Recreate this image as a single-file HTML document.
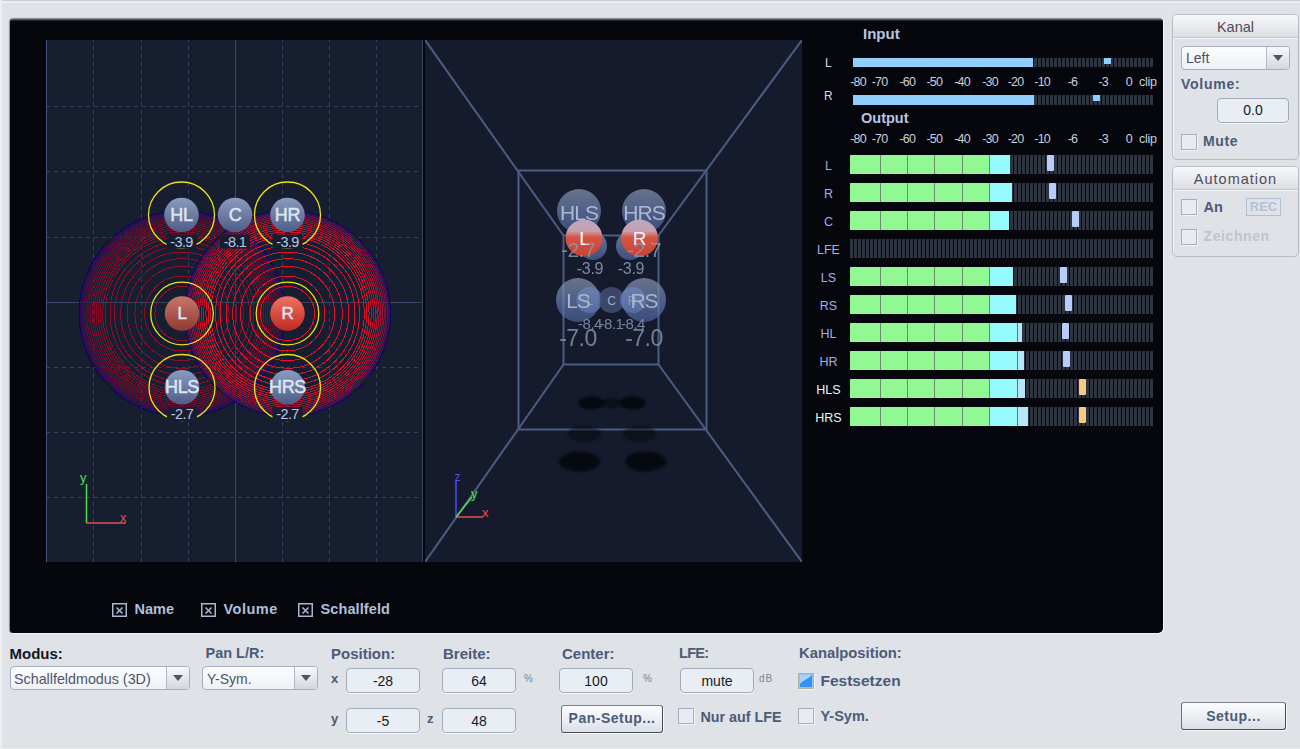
<!DOCTYPE html><html><head><meta charset="utf-8"><style>

html,body{margin:0;padding:0;}
body{width:1300px;height:749px;overflow:hidden;position:relative;background:#dfe2e6;font-family:"Liberation Sans",sans-serif;}
.a{position:absolute;white-space:nowrap;}
.lbl{position:absolute;white-space:nowrap;font-weight:bold;font-size:14.5px;color:#4b5b78;line-height:1;}
.inp{position:absolute;box-sizing:border-box;border:1px solid #a3abb8;border-radius:4px;background:#e9edf4;text-align:center;font-size:14px;color:#141a28;box-shadow:0 1px 0 #f6f7f9;}
.cb{position:absolute;box-sizing:border-box;width:16px;height:16px;border:1px solid #a7afbd;background:#e8ecf2;box-shadow:1px 1px 0 #f4f5f7;}
.dd{position:absolute;box-sizing:border-box;border:1px solid #a7afbf;border-radius:4px;background:linear-gradient(#fbfcfd,#eef1f5);font-size:14px;color:#4d556c;}
.dd .ar{position:absolute;right:0;top:0;bottom:0;width:22px;border-left:1px solid #b4bac6;background:linear-gradient(#f8f9fc,#d2d6de);border-radius:0 3px 3px 0;}
.dd .ar:after{content:"";position:absolute;left:6px;top:8px;border-left:5px solid transparent;border-right:5px solid transparent;border-top:6px solid #505460;}
.btn{position:absolute;box-sizing:border-box;border:1px solid #454c58;border-top-color:#7a808a;border-left-color:#6a707c;border-radius:3px;background:linear-gradient(#fbfcfe 0,#eef0f6 45%,#dcdfe6 100%);font-weight:bold;font-size:14px;color:#4b5b78;text-align:center;box-shadow:1px 1px 0 #f6f7f9;}

</style></head><body>
<div class="a" style="left:0;top:0;width:1300px;height:1px;background:#c9cdd3"></div>
<div class="a" style="left:0;top:1px;width:1300px;height:2px;background:#eceef1"></div>
<div class="a" style="left:0;top:0;width:2px;height:749px;background:#eceef1"></div>
<div class="a" style="left:0;top:748px;width:1300px;height:1px;background:#e8eaee"></div>
<div class="a" style="left:10px;top:18px;width:1153px;height:615px;background:linear-gradient(#a4a8ae 0,#6c7078 1px,#22252c 2.5px,#05070c 3.5px);border-radius:4px 4px 5px 3px;box-shadow:1px 1px 0 #f4f5f7, -1px 0 1px #8a8e96"></div>
<svg class="a" style="left:46px;top:40px" width="377" height="522" viewBox="0 0 377 522">
<defs>
<radialGradient id="fldL" cx="0.5" cy="0.5" r="0.5"><stop offset="0" stop-color="#171e30" stop-opacity="0.1"/><stop offset="0.7" stop-color="#1b1c30" stop-opacity="0.15"/><stop offset="1" stop-color="#30142e" stop-opacity="0.35"/></radialGradient>
<radialGradient id="fldR" cx="0.5" cy="0.5" r="0.5"><stop offset="0" stop-color="#171e30" stop-opacity="0.1"/><stop offset="0.7" stop-color="#1c1c30" stop-opacity="0.15"/><stop offset="1" stop-color="#3a1430" stop-opacity="0.35"/></radialGradient>
<linearGradient id="ballB" x1="0" y1="0" x2="0" y2="1"><stop offset="0" stop-color="#8c9cc0"/><stop offset="1" stop-color="#4c5c84"/></linearGradient>
<linearGradient id="ballL" x1="0" y1="0" x2="0" y2="1"><stop offset="0" stop-color="#c8766a"/><stop offset="1" stop-color="#8e3a34"/></linearGradient>
<linearGradient id="ballR" x1="0" y1="0" x2="0" y2="1"><stop offset="0" stop-color="#f07260"/><stop offset="1" stop-color="#c02a22"/></linearGradient>
</defs>
<rect x="0" y="0" width="377" height="522" fill="#171e30"/>
<line x1="47.5" y1="0" x2="47.5" y2="522" stroke="#33425f" stroke-width="1" stroke-dasharray="4 4" stroke-dashoffset="2"/>
<line x1="95.5" y1="0" x2="95.5" y2="522" stroke="#33425f" stroke-width="1" stroke-dasharray="4 4" stroke-dashoffset="2"/>
<line x1="142.5" y1="0" x2="142.5" y2="522" stroke="#33425f" stroke-width="1" stroke-dasharray="4 4" stroke-dashoffset="2"/>
<line x1="236.5" y1="0" x2="236.5" y2="522" stroke="#33425f" stroke-width="1" stroke-dasharray="4 4" stroke-dashoffset="2"/>
<line x1="283.5" y1="0" x2="283.5" y2="522" stroke="#33425f" stroke-width="1" stroke-dasharray="4 4" stroke-dashoffset="2"/>
<line x1="330.5" y1="0" x2="330.5" y2="522" stroke="#33425f" stroke-width="1" stroke-dasharray="4 4" stroke-dashoffset="2"/>
<line x1="0" y1="66.5" x2="377" y2="66.5" stroke="#33425f" stroke-width="1" stroke-dasharray="4 4"/>
<line x1="0" y1="131.5" x2="377" y2="131.5" stroke="#33425f" stroke-width="1" stroke-dasharray="4 4"/>
<line x1="0" y1="197.5" x2="377" y2="197.5" stroke="#33425f" stroke-width="1" stroke-dasharray="4 4"/>
<line x1="0" y1="327.5" x2="377" y2="327.5" stroke="#33425f" stroke-width="1" stroke-dasharray="4 4"/>
<line x1="0" y1="392.5" x2="377" y2="392.5" stroke="#33425f" stroke-width="1" stroke-dasharray="4 4"/>
<line x1="0" y1="457.5" x2="377" y2="457.5" stroke="#33425f" stroke-width="1" stroke-dasharray="4 4"/>
<line x1="189.5" y1="0" x2="189.5" y2="522" stroke="#3a4a68" stroke-width="1"/>
<line x1="0" y1="262.5" x2="377" y2="262.5" stroke="#3a4a68" stroke-width="1"/>
<line x1="0.5" y1="0" x2="0.5" y2="522" stroke="#3d5580" stroke-width="1"/>
<line x1="376.5" y1="0" x2="376.5" y2="522" stroke="#33445f" stroke-width="1"/>
<circle cx="136" cy="273.5" r="103" fill="url(#fldL)"/><circle cx="136" cy="273.5" r="27.1" fill="none" stroke="rgb(145,12,40)" stroke-width="1" shape-rendering="crispEdges"/><circle cx="136" cy="273.5" r="37.5" fill="none" stroke="rgb(145,12,40)" stroke-width="1" shape-rendering="crispEdges"/><circle cx="136" cy="273.5" r="47.1" fill="none" stroke="rgb(145,12,40)" stroke-width="1" shape-rendering="crispEdges"/><circle cx="136" cy="273.5" r="54.8" fill="none" stroke="rgb(145,12,40)" stroke-width="1" shape-rendering="crispEdges"/><circle cx="136" cy="273.5" r="61.3" fill="none" stroke="rgb(145,12,40)" stroke-width="1" shape-rendering="crispEdges"/><circle cx="136" cy="273.5" r="67.5" fill="none" stroke="rgb(145,12,40)" stroke-width="1" shape-rendering="crispEdges"/><circle cx="136" cy="273.5" r="72" fill="none" stroke="rgb(145,12,40)" stroke-width="1" shape-rendering="crispEdges"/><circle cx="136" cy="273.5" r="76.8" fill="none" stroke="rgb(145,12,40)" stroke-width="1" shape-rendering="crispEdges"/><circle cx="136" cy="273.5" r="79.3" fill="none" stroke="rgb(141,12,40)" stroke-width="1" shape-rendering="crispEdges"/><circle cx="136" cy="273.5" r="81.6" fill="none" stroke="rgb(135,12,40)" stroke-width="1" shape-rendering="crispEdges"/><circle cx="136" cy="273.5" r="83.8" fill="none" stroke="rgb(129,12,41)" stroke-width="1" shape-rendering="crispEdges"/><circle cx="136" cy="273.5" r="85.9" fill="none" stroke="rgb(124,12,41)" stroke-width="1" shape-rendering="crispEdges"/><circle cx="136" cy="273.5" r="87.9" fill="none" stroke="rgb(119,12,41)" stroke-width="1" shape-rendering="crispEdges"/><circle cx="136" cy="273.5" r="89.8" fill="none" stroke="rgb(112,12,45)" stroke-width="1" shape-rendering="crispEdges"/><circle cx="136" cy="273.5" r="91.6" fill="none" stroke="rgb(106,12,48)" stroke-width="1" shape-rendering="crispEdges"/><circle cx="136" cy="273.5" r="93.4" fill="none" stroke="rgb(101,12,52)" stroke-width="1" shape-rendering="crispEdges"/><circle cx="136" cy="273.5" r="95.1" fill="none" stroke="rgb(95,12,55)" stroke-width="1" shape-rendering="crispEdges"/><circle cx="136" cy="273.5" r="96.8" fill="none" stroke="rgb(85,12,63)" stroke-width="1" shape-rendering="crispEdges"/><circle cx="136" cy="273.5" r="98.4" fill="none" stroke="rgb(75,12,72)" stroke-width="1" shape-rendering="crispEdges"/><circle cx="136" cy="273.5" r="100" fill="none" stroke="rgb(60,11,85)" stroke-width="1" shape-rendering="crispEdges"/><circle cx="136" cy="273.5" r="101.5" fill="none" stroke="rgb(43,9,100)" stroke-width="1" shape-rendering="crispEdges"/><circle cx="136" cy="273.5" r="103" fill="none" stroke="rgb(4,6,100)" stroke-width="1" shape-rendering="crispEdges"/>
<circle cx="241.5" cy="273.5" r="103" fill="url(#fldR)"/><circle cx="241.5" cy="273.5" r="27.1" fill="none" stroke="rgb(225,16,40)" stroke-width="1" shape-rendering="crispEdges"/><circle cx="241.5" cy="273.5" r="37.5" fill="none" stroke="rgb(225,16,40)" stroke-width="1" shape-rendering="crispEdges"/><circle cx="241.5" cy="273.5" r="47.1" fill="none" stroke="rgb(225,16,40)" stroke-width="1" shape-rendering="crispEdges"/><circle cx="241.5" cy="273.5" r="54.8" fill="none" stroke="rgb(225,16,40)" stroke-width="1" shape-rendering="crispEdges"/><circle cx="241.5" cy="273.5" r="61.3" fill="none" stroke="rgb(225,16,40)" stroke-width="1" shape-rendering="crispEdges"/><circle cx="241.5" cy="273.5" r="67.5" fill="none" stroke="rgb(225,16,40)" stroke-width="1" shape-rendering="crispEdges"/><circle cx="241.5" cy="273.5" r="72" fill="none" stroke="rgb(225,16,40)" stroke-width="1" shape-rendering="crispEdges"/><circle cx="241.5" cy="273.5" r="76.8" fill="none" stroke="rgb(225,16,40)" stroke-width="1" shape-rendering="crispEdges"/><circle cx="241.5" cy="273.5" r="79.3" fill="none" stroke="rgb(219,16,40)" stroke-width="1" shape-rendering="crispEdges"/><circle cx="241.5" cy="273.5" r="81.6" fill="none" stroke="rgb(210,16,40)" stroke-width="1" shape-rendering="crispEdges"/><circle cx="241.5" cy="273.5" r="83.8" fill="none" stroke="rgb(201,16,41)" stroke-width="1" shape-rendering="crispEdges"/><circle cx="241.5" cy="273.5" r="85.9" fill="none" stroke="rgb(193,16,41)" stroke-width="1" shape-rendering="crispEdges"/><circle cx="241.5" cy="273.5" r="87.9" fill="none" stroke="rgb(184,16,41)" stroke-width="1" shape-rendering="crispEdges"/><circle cx="241.5" cy="273.5" r="89.8" fill="none" stroke="rgb(175,16,45)" stroke-width="1" shape-rendering="crispEdges"/><circle cx="241.5" cy="273.5" r="91.6" fill="none" stroke="rgb(165,16,48)" stroke-width="1" shape-rendering="crispEdges"/><circle cx="241.5" cy="273.5" r="93.4" fill="none" stroke="rgb(156,16,52)" stroke-width="1" shape-rendering="crispEdges"/><circle cx="241.5" cy="273.5" r="95.1" fill="none" stroke="rgb(147,16,55)" stroke-width="1" shape-rendering="crispEdges"/><circle cx="241.5" cy="273.5" r="96.8" fill="none" stroke="rgb(132,16,63)" stroke-width="1" shape-rendering="crispEdges"/><circle cx="241.5" cy="273.5" r="98.4" fill="none" stroke="rgb(117,16,72)" stroke-width="1" shape-rendering="crispEdges"/><circle cx="241.5" cy="273.5" r="100" fill="none" stroke="rgb(94,14,85)" stroke-width="1" shape-rendering="crispEdges"/><circle cx="241.5" cy="273.5" r="101.5" fill="none" stroke="rgb(67,12,100)" stroke-width="1" shape-rendering="crispEdges"/><circle cx="241.5" cy="273.5" r="103" fill="none" stroke="rgb(6,8,100)" stroke-width="1" shape-rendering="crispEdges"/>
<circle cx="135.5" cy="175" r="33" fill="none" stroke="#ecE414" stroke-width="1.3"/>
<circle cx="241.5" cy="175" r="33" fill="none" stroke="#ecE414" stroke-width="1.3"/>
<circle cx="136" cy="273.5" r="31.3" fill="none" stroke="#ecE414" stroke-width="1.3"/>
<circle cx="241.5" cy="273.5" r="31.3" fill="none" stroke="#ecE414" stroke-width="1.3"/>
<circle cx="136" cy="347.5" r="33" fill="none" stroke="#ecE414" stroke-width="1.3"/>
<circle cx="241.5" cy="347.5" r="33" fill="none" stroke="#ecE414" stroke-width="1.3"/>
<rect x="120.5" y="194.5" width="30" height="14" fill="#171e30"/>
<text x="135.5" y="206.5" text-anchor="middle" font-family="Liberation Sans" font-size="14.5" fill="#b4c8e6" letter-spacing="-0.6">-3.9</text>
<rect x="174" y="194.5" width="30" height="14" fill="#171e30"/>
<text x="189" y="206.5" text-anchor="middle" font-family="Liberation Sans" font-size="14.5" fill="#b4c8e6" letter-spacing="-0.6">-8.1</text>
<rect x="226.5" y="194.5" width="30" height="14" fill="#171e30"/>
<text x="241.5" y="206.5" text-anchor="middle" font-family="Liberation Sans" font-size="14.5" fill="#b4c8e6" letter-spacing="-0.6">-3.9</text>
<rect x="121" y="367" width="30" height="14" fill="#171e30"/>
<text x="136" y="379" text-anchor="middle" font-family="Liberation Sans" font-size="14.5" fill="#b4c8e6" letter-spacing="-0.6">-2.7</text>
<rect x="226.5" y="367" width="30" height="14" fill="#171e30"/>
<text x="241.5" y="379" text-anchor="middle" font-family="Liberation Sans" font-size="14.5" fill="#b4c8e6" letter-spacing="-0.6">-2.7</text>
<circle cx="135.5" cy="175" r="17.3" fill="url(#ballB)"/>
<text x="135.5" y="180.5" text-anchor="middle" font-family="Liberation Sans" font-size="18" fill="#dde6f2" stroke="#dde6f2" stroke-width="0.5" letter-spacing="-0.3">HL</text>
<circle cx="189" cy="175" r="17.3" fill="url(#ballB)"/>
<text x="189" y="180.5" text-anchor="middle" font-family="Liberation Sans" font-size="18" fill="#dde6f2" stroke="#dde6f2" stroke-width="0.5" letter-spacing="-0.3">C</text>
<circle cx="241.5" cy="175" r="17.3" fill="url(#ballB)"/>
<text x="241.5" y="180.5" text-anchor="middle" font-family="Liberation Sans" font-size="18" fill="#dde6f2" stroke="#dde6f2" stroke-width="0.5" letter-spacing="-0.3">HR</text>
<circle cx="136" cy="273.5" r="17.3" fill="url(#ballL)"/>
<text x="136" y="279.0" text-anchor="middle" font-family="Liberation Sans" font-size="17" fill="#dde6f2" stroke="#dde6f2" stroke-width="0.5" letter-spacing="-0.3">L</text>
<circle cx="241.5" cy="273.5" r="17.3" fill="url(#ballR)"/>
<text x="241.5" y="279.0" text-anchor="middle" font-family="Liberation Sans" font-size="17" fill="#dde6f2" stroke="#dde6f2" stroke-width="0.5" letter-spacing="-0.3">R</text>
<circle cx="136" cy="347.3" r="17.3" fill="url(#ballB)"/>
<text x="136" y="352.8" text-anchor="middle" font-family="Liberation Sans" font-size="18" fill="#dde6f2" stroke="#dde6f2" stroke-width="0.5" letter-spacing="-0.3">HLS</text>
<circle cx="241.5" cy="347.3" r="17.3" fill="url(#ballB)"/>
<text x="241.5" y="352.8" text-anchor="middle" font-family="Liberation Sans" font-size="18" fill="#dde6f2" stroke="#dde6f2" stroke-width="0.5" letter-spacing="-0.3">HRS</text>
<line x1="40.5" y1="444" x2="40.5" y2="483" stroke="#4ee04e" stroke-width="1.5"/>
<line x1="40" y1="483" x2="80" y2="483" stroke="#e05050" stroke-width="1.5"/>
<text x="34" y="442" font-family="Liberation Sans" font-size="13" fill="#4ee04e">y</text>
<text x="74" y="482" font-family="Liberation Sans" font-size="13" fill="#e05050">x</text>
</svg>
<svg class="a" style="left:425px;top:40px" width="377" height="522" viewBox="0 0 377 522">
<defs>
<linearGradient id="sphB" x1="0" y1="0" x2="0" y2="1"><stop offset="0" stop-color="#8894ae" stop-opacity="0.85"/><stop offset="0.5" stop-color="#6a80b4" stop-opacity="0.8"/><stop offset="1" stop-color="#5068a4" stop-opacity="0.75"/></linearGradient>
<linearGradient id="sphR" x1="0" y1="0" x2="0" y2="1"><stop offset="0" stop-color="#b8a8c4"/><stop offset="0.32" stop-color="#c8a0ac"/><stop offset="0.48" stop-color="#d65444"/><stop offset="1" stop-color="#c84232"/></linearGradient>
<filter id="blr" x="-50%" y="-50%" width="200%" height="200%" color-interpolation-filters="sRGB"><feGaussianBlur stdDeviation="1.3"/></filter>
</defs>
<rect x="0" y="0" width="377" height="522" fill="#151b2d"/>
<rect x="93.5" y="130.5" width="188.0" height="259.0" fill="none" stroke="#4b5d82" stroke-width="2"/>
<rect x="138.5" y="195.5" width="95.0" height="129.0" fill="none" stroke="#4b5d82" stroke-width="2"/>
<line x1="0" y1="0" x2="138.5" y2="195.5" stroke="#4b5d82" stroke-width="2"/>
<line x1="377" y1="0" x2="233.5" y2="195.5" stroke="#4b5d82" stroke-width="2"/>
<line x1="0" y1="522" x2="138.5" y2="324.5" stroke="#4b5d82" stroke-width="2"/>
<line x1="377" y1="522" x2="233.5" y2="324.5" stroke="#4b5d82" stroke-width="2"/>
<ellipse cx="166.5" cy="363" rx="13.5" ry="6.5" fill="#05070c" opacity="0.9" filter="url(#blr)"/>
<ellipse cx="186.5" cy="363" rx="9" ry="5.5" fill="#05070c" opacity="0.5" filter="url(#blr)"/>
<ellipse cx="207.5" cy="363" rx="13.5" ry="6.5" fill="#05070c" opacity="0.9" filter="url(#blr)"/>
<ellipse cx="159.5" cy="394" rx="17" ry="8" fill="#05070c" opacity="0.45" filter="url(#blr)"/>
<ellipse cx="214.5" cy="394" rx="17" ry="8" fill="#05070c" opacity="0.45" filter="url(#blr)"/>
<ellipse cx="154.5" cy="421.5" rx="20.5" ry="10" fill="#05070c" opacity="0.85" filter="url(#blr)"/>
<ellipse cx="220.5" cy="421.5" rx="20.5" ry="10" fill="#05070c" opacity="0.85" filter="url(#blr)"/>
<circle cx="164.5" cy="260" r="13" fill="#5a78b4" opacity="0.75"/>
<circle cx="186.5" cy="260" r="13" fill="#3e4c70" opacity="0.9"/>
<circle cx="208" cy="260" r="13" fill="#5a78b4" opacity="0.75"/>
<circle cx="153" cy="260" r="22" fill="url(#sphB)" opacity="0.85"/>
<circle cx="219" cy="260" r="22" fill="url(#sphB)" opacity="0.85"/>
<text x="186.5" y="265" text-anchor="middle" font-family="Liberation Sans" font-size="12" fill="#a0acc4" opacity="1" letter-spacing="0">C</text>
<text x="165" y="265" text-anchor="middle" font-family="Liberation Sans" font-size="12" fill="#a0acc4" opacity="0.7" letter-spacing="0">L</text>
<text x="207" y="265" text-anchor="middle" font-family="Liberation Sans" font-size="12" fill="#a0acc4" opacity="0.7" letter-spacing="0">R</text>
<text x="153" y="268" text-anchor="middle" font-family="Liberation Sans" font-size="21" fill="#b4bed2" opacity="0.9" letter-spacing="-1">LS</text>
<text x="219" y="268" text-anchor="middle" font-family="Liberation Sans" font-size="21" fill="#b4bed2" opacity="0.9" letter-spacing="-1">RS</text>
<text x="165" y="289" text-anchor="middle" font-family="Liberation Sans" font-size="15" fill="#8090b0" opacity="0.9" letter-spacing="-0.5">-8.4</text>
<text x="186.5" y="289" text-anchor="middle" font-family="Liberation Sans" font-size="15" fill="#8090b0" opacity="0.9" letter-spacing="-0.5">-8.1</text>
<text x="208" y="289" text-anchor="middle" font-family="Liberation Sans" font-size="15" fill="#8090b0" opacity="0.9" letter-spacing="-0.5">-8.4</text>
<text x="153" y="306" text-anchor="middle" font-family="Liberation Sans" font-size="23" fill="#7c8aa8" opacity="0.9" letter-spacing="-0.5">-7.0</text>
<text x="219" y="306" text-anchor="middle" font-family="Liberation Sans" font-size="23" fill="#7c8aa8" opacity="0.9" letter-spacing="-0.5">-7.0</text>
<circle cx="168" cy="206" r="14" fill="url(#sphB)" opacity="0.9"/>
<circle cx="205" cy="206" r="14" fill="url(#sphB)" opacity="0.9"/>
<circle cx="154" cy="171" r="22" fill="url(#sphB)" opacity="0.85"/>
<circle cx="219" cy="171" r="22" fill="url(#sphB)" opacity="0.85"/>
<text x="154" y="180" text-anchor="middle" font-family="Liberation Sans" font-size="21" fill="#b8c2d6" opacity="0.9" letter-spacing="-1">HLS</text>
<text x="219" y="180" text-anchor="middle" font-family="Liberation Sans" font-size="21" fill="#b8c2d6" opacity="0.9" letter-spacing="-1">HRS</text>
<circle cx="159" cy="198" r="18.5" fill="url(#sphR)" opacity="1"/>
<circle cx="214.5" cy="198" r="18.5" fill="url(#sphR)" opacity="1"/>
<text x="159.5" y="205" text-anchor="middle" font-family="Liberation Sans" font-size="19" fill="#ffffff" opacity="1" letter-spacing="0">L</text>
<text x="214.5" y="205" text-anchor="middle" font-family="Liberation Sans" font-size="19" fill="#f4f4ff" opacity="1" letter-spacing="0">R</text>
<text x="153" y="216.5" text-anchor="middle" font-family="Liberation Sans" font-size="21" fill="#8896b2" opacity="0.85" letter-spacing="-0.5">-2.7</text>
<text x="219" y="216.5" text-anchor="middle" font-family="Liberation Sans" font-size="21" fill="#8896b2" opacity="0.85" letter-spacing="-0.5">-2.7</text>
<text x="165" y="234" text-anchor="middle" font-family="Liberation Sans" font-size="16" fill="#8896b2" opacity="0.9" letter-spacing="-0.3">-3.9</text>
<text x="206" y="234" text-anchor="middle" font-family="Liberation Sans" font-size="16" fill="#8896b2" opacity="0.9" letter-spacing="-0.3">-3.9</text>
<line x1="31" y1="441" x2="31" y2="477" stroke="#5050e8" stroke-width="1.5"/>
<line x1="31" y1="477" x2="58" y2="477" stroke="#e05050" stroke-width="1.5"/>
<line x1="31" y1="477" x2="47" y2="457" stroke="#4ee04e" stroke-width="1.5"/>
<text x="29.5" y="441" font-family="Liberation Sans" font-size="12" fill="#5050e8">z</text>
<text x="46" y="458" font-family="Liberation Sans" font-size="13" fill="#4ee04e">y</text>
<text x="57" y="477" font-family="Liberation Sans" font-size="13" fill="#e05050">x</text>
</svg>
<svg class="a" style="left:112px;top:603px" width="15" height="14"><rect x="0.75" y="0.75" width="13.5" height="12.5" fill="none" stroke="#a9b5d2" stroke-width="1.5"/><path d="M4.5 4.5 L10.5 10.5 M10.5 4.5 L4.5 10.5" stroke="#a9b5d2" stroke-width="1.6"/></svg>
<div class="a" style="left:134.5px;top:601px;font-size:14.5px;font-weight:bold;color:#b3bfdb;line-height:16px;letter-spacing:0px">Name</div>
<svg class="a" style="left:200.5px;top:603px" width="15" height="14"><rect x="0.75" y="0.75" width="13.5" height="12.5" fill="none" stroke="#a9b5d2" stroke-width="1.5"/><path d="M4.5 4.5 L10.5 10.5 M10.5 4.5 L4.5 10.5" stroke="#a9b5d2" stroke-width="1.6"/></svg>
<div class="a" style="left:223.5px;top:601px;font-size:14.5px;font-weight:bold;color:#b3bfdb;line-height:16px;letter-spacing:0.5px">Volume</div>
<svg class="a" style="left:298px;top:603px" width="15" height="14"><rect x="0.75" y="0.75" width="13.5" height="12.5" fill="none" stroke="#a9b5d2" stroke-width="1.5"/><path d="M4.5 4.5 L10.5 10.5 M10.5 4.5 L4.5 10.5" stroke="#a9b5d2" stroke-width="1.6"/></svg>
<div class="a" style="left:320.5px;top:601px;font-size:14.5px;font-weight:bold;color:#b3bfdb;line-height:16px;letter-spacing:0.1px">Schallfeld</div>
<div class="a" style="left:863px;top:25px;font-size:15px;font-weight:bold;color:#b9c4e2;line-height:18px">Input</div>
<div class="a" style="left:861px;top:109px;font-size:14.5px;font-weight:bold;color:#b9c4e2;line-height:18px">Output</div>
<div class="a" style="left:843px;top:76.7px;width:30px;text-align:center;font-size:12.5px;color:#c9d0de;line-height:11px;letter-spacing:-0.8px">-80</div>
<div class="a" style="left:864.6px;top:76.7px;width:30px;text-align:center;font-size:12.5px;color:#c9d0de;line-height:11px;letter-spacing:-0.8px">-70</div>
<div class="a" style="left:892.3px;top:76.7px;width:30px;text-align:center;font-size:12.5px;color:#c9d0de;line-height:11px;letter-spacing:-0.8px">-60</div>
<div class="a" style="left:919.3px;top:76.7px;width:30px;text-align:center;font-size:12.5px;color:#c9d0de;line-height:11px;letter-spacing:-0.8px">-50</div>
<div class="a" style="left:947px;top:76.7px;width:30px;text-align:center;font-size:12.5px;color:#c9d0de;line-height:11px;letter-spacing:-0.8px">-40</div>
<div class="a" style="left:975px;top:76.7px;width:30px;text-align:center;font-size:12.5px;color:#c9d0de;line-height:11px;letter-spacing:-0.8px">-30</div>
<div class="a" style="left:1000.6px;top:76.7px;width:30px;text-align:center;font-size:12.5px;color:#c9d0de;line-height:11px;letter-spacing:-0.8px">-20</div>
<div class="a" style="left:1027.2px;top:76.7px;width:30px;text-align:center;font-size:12.5px;color:#c9d0de;line-height:11px;letter-spacing:-0.8px">-10</div>
<div class="a" style="left:1057.4px;top:76.7px;width:30px;text-align:center;font-size:12.5px;color:#c9d0de;line-height:11px;letter-spacing:-0.8px">-6</div>
<div class="a" style="left:1088.2px;top:76.7px;width:30px;text-align:center;font-size:12.5px;color:#c9d0de;line-height:11px;letter-spacing:-0.8px">-3</div>
<div class="a" style="left:1113.8px;top:76.7px;width:30px;text-align:center;font-size:12.5px;color:#c9d0de;line-height:11px;letter-spacing:-0.8px">0</div>
<div class="a" style="left:1139px;top:76.7px;font-size:12.5px;color:#c9d0de;line-height:11px;letter-spacing:-0.3px">clip</div>
<div class="a" style="left:843px;top:133.7px;width:30px;text-align:center;font-size:12.5px;color:#c9d0de;line-height:11px;letter-spacing:-0.8px">-80</div>
<div class="a" style="left:864.6px;top:133.7px;width:30px;text-align:center;font-size:12.5px;color:#c9d0de;line-height:11px;letter-spacing:-0.8px">-70</div>
<div class="a" style="left:892.3px;top:133.7px;width:30px;text-align:center;font-size:12.5px;color:#c9d0de;line-height:11px;letter-spacing:-0.8px">-60</div>
<div class="a" style="left:919.3px;top:133.7px;width:30px;text-align:center;font-size:12.5px;color:#c9d0de;line-height:11px;letter-spacing:-0.8px">-50</div>
<div class="a" style="left:947px;top:133.7px;width:30px;text-align:center;font-size:12.5px;color:#c9d0de;line-height:11px;letter-spacing:-0.8px">-40</div>
<div class="a" style="left:975px;top:133.7px;width:30px;text-align:center;font-size:12.5px;color:#c9d0de;line-height:11px;letter-spacing:-0.8px">-30</div>
<div class="a" style="left:1000.6px;top:133.7px;width:30px;text-align:center;font-size:12.5px;color:#c9d0de;line-height:11px;letter-spacing:-0.8px">-20</div>
<div class="a" style="left:1027.2px;top:133.7px;width:30px;text-align:center;font-size:12.5px;color:#c9d0de;line-height:11px;letter-spacing:-0.8px">-10</div>
<div class="a" style="left:1057.4px;top:133.7px;width:30px;text-align:center;font-size:12.5px;color:#c9d0de;line-height:11px;letter-spacing:-0.8px">-6</div>
<div class="a" style="left:1088.2px;top:133.7px;width:30px;text-align:center;font-size:12.5px;color:#c9d0de;line-height:11px;letter-spacing:-0.8px">-3</div>
<div class="a" style="left:1113.8px;top:133.7px;width:30px;text-align:center;font-size:12.5px;color:#c9d0de;line-height:11px;letter-spacing:-0.8px">0</div>
<div class="a" style="left:1139px;top:133.7px;font-size:12.5px;color:#c9d0de;line-height:11px;letter-spacing:-0.3px">clip</div>
<div class="a" style="left:825px;top:57px;font-size:12px;color:#d2d8e6;line-height:12px">L</div>
<div class="a" style="left:853px;top:58px;width:300px;height:9px;background:repeating-linear-gradient(90deg,#06080d 0,#06080d 1px,#2e3541 1px,#2e3541 4px)"></div>
<div class="a" style="left:853px;top:58px;width:180px;height:9px;background:#90cefd"></div>
<div class="a" style="left:1104px;top:58px;width:7px;height:6px;background:#90cefd"></div>
<div class="a" style="left:824px;top:90px;font-size:12px;color:#d2d8e6;line-height:12px">R</div>
<div class="a" style="left:853px;top:95px;width:300px;height:10px;background:repeating-linear-gradient(90deg,#06080d 0,#06080d 1px,#2e3541 1px,#2e3541 4px)"></div>
<div class="a" style="left:853px;top:95px;width:181px;height:10px;background:#90cefd"></div>
<div class="a" style="left:1093px;top:95px;width:7px;height:6px;background:#90cefd"></div>
<div class="a" style="left:808.5px;top:159.5px;width:40px;text-align:center;font-size:12.5px;color:#a4acec;line-height:12px">L</div>
<div class="a" style="left:850px;top:155px;width:303px;height:19px;background:repeating-linear-gradient(90deg,#2e3541 0,#2e3541 3px,#06080d 3px,#06080d 4px)"></div>
<div class="a" style="left:850px;top:155px;width:140px;height:19px;background:#92f894"></div>
<div class="a" style="left:879.6px;top:155px;width:1px;height:19px;background:#6f8a72"></div>
<div class="a" style="left:907.3px;top:155px;width:1px;height:19px;background:#6f8a72"></div>
<div class="a" style="left:934.3px;top:155px;width:1px;height:19px;background:#6f8a72"></div>
<div class="a" style="left:962px;top:155px;width:1px;height:19px;background:#6f8a72"></div>
<div class="a" style="left:989px;top:155px;width:1px;height:19px;background:#6f8a72"></div>
<div class="a" style="left:990px;top:155px;width:20px;height:19px;background:#94fafc"></div>
<div class="a" style="left:1047px;top:155px;width:7px;height:16px;background:#b8ccfa;border-radius:1px"></div>
<div class="a" style="left:808.5px;top:187.5px;width:40px;text-align:center;font-size:12.5px;color:#a4acec;line-height:12px">R</div>
<div class="a" style="left:850px;top:183px;width:303px;height:19px;background:repeating-linear-gradient(90deg,#2e3541 0,#2e3541 3px,#06080d 3px,#06080d 4px)"></div>
<div class="a" style="left:850px;top:183px;width:140px;height:19px;background:#92f894"></div>
<div class="a" style="left:879.6px;top:183px;width:1px;height:19px;background:#6f8a72"></div>
<div class="a" style="left:907.3px;top:183px;width:1px;height:19px;background:#6f8a72"></div>
<div class="a" style="left:934.3px;top:183px;width:1px;height:19px;background:#6f8a72"></div>
<div class="a" style="left:962px;top:183px;width:1px;height:19px;background:#6f8a72"></div>
<div class="a" style="left:989px;top:183px;width:1px;height:19px;background:#6f8a72"></div>
<div class="a" style="left:990px;top:183px;width:22px;height:19px;background:#94fafc"></div>
<div class="a" style="left:1049px;top:183px;width:7px;height:16px;background:#b8ccfa;border-radius:1px"></div>
<div class="a" style="left:808.5px;top:215.5px;width:40px;text-align:center;font-size:12.5px;color:#a4acec;line-height:12px">C</div>
<div class="a" style="left:850px;top:211px;width:303px;height:19px;background:repeating-linear-gradient(90deg,#2e3541 0,#2e3541 3px,#06080d 3px,#06080d 4px)"></div>
<div class="a" style="left:850px;top:211px;width:140px;height:19px;background:#92f894"></div>
<div class="a" style="left:879.6px;top:211px;width:1px;height:19px;background:#6f8a72"></div>
<div class="a" style="left:907.3px;top:211px;width:1px;height:19px;background:#6f8a72"></div>
<div class="a" style="left:934.3px;top:211px;width:1px;height:19px;background:#6f8a72"></div>
<div class="a" style="left:962px;top:211px;width:1px;height:19px;background:#6f8a72"></div>
<div class="a" style="left:989px;top:211px;width:1px;height:19px;background:#6f8a72"></div>
<div class="a" style="left:990px;top:211px;width:19px;height:19px;background:#94fafc"></div>
<div class="a" style="left:1071.5px;top:211px;width:7px;height:16px;background:#b8ccfa;border-radius:1px"></div>
<div class="a" style="left:808.5px;top:243.5px;width:40px;text-align:center;font-size:12.5px;color:#a4acec;line-height:12px">LFE</div>
<div class="a" style="left:850px;top:239px;width:303px;height:19px;background:repeating-linear-gradient(90deg,#2e3541 0,#2e3541 3px,#06080d 3px,#06080d 4px)"></div>
<div class="a" style="left:808.5px;top:271.5px;width:40px;text-align:center;font-size:12.5px;color:#a4acec;line-height:12px">LS</div>
<div class="a" style="left:850px;top:267px;width:303px;height:19px;background:repeating-linear-gradient(90deg,#2e3541 0,#2e3541 3px,#06080d 3px,#06080d 4px)"></div>
<div class="a" style="left:850px;top:267px;width:140px;height:19px;background:#92f894"></div>
<div class="a" style="left:879.6px;top:267px;width:1px;height:19px;background:#6f8a72"></div>
<div class="a" style="left:907.3px;top:267px;width:1px;height:19px;background:#6f8a72"></div>
<div class="a" style="left:934.3px;top:267px;width:1px;height:19px;background:#6f8a72"></div>
<div class="a" style="left:962px;top:267px;width:1px;height:19px;background:#6f8a72"></div>
<div class="a" style="left:989px;top:267px;width:1px;height:19px;background:#6f8a72"></div>
<div class="a" style="left:990px;top:267px;width:23px;height:19px;background:#94fafc"></div>
<div class="a" style="left:1059.5px;top:267px;width:7px;height:16px;background:#b8ccfa;border-radius:1px"></div>
<div class="a" style="left:808.5px;top:299.5px;width:40px;text-align:center;font-size:12.5px;color:#a4acec;line-height:12px">RS</div>
<div class="a" style="left:850px;top:295px;width:303px;height:19px;background:repeating-linear-gradient(90deg,#2e3541 0,#2e3541 3px,#06080d 3px,#06080d 4px)"></div>
<div class="a" style="left:850px;top:295px;width:140px;height:19px;background:#92f894"></div>
<div class="a" style="left:879.6px;top:295px;width:1px;height:19px;background:#6f8a72"></div>
<div class="a" style="left:907.3px;top:295px;width:1px;height:19px;background:#6f8a72"></div>
<div class="a" style="left:934.3px;top:295px;width:1px;height:19px;background:#6f8a72"></div>
<div class="a" style="left:962px;top:295px;width:1px;height:19px;background:#6f8a72"></div>
<div class="a" style="left:989px;top:295px;width:1px;height:19px;background:#6f8a72"></div>
<div class="a" style="left:990px;top:295px;width:25.700000000000045px;height:19px;background:#94fafc"></div>
<div class="a" style="left:1065px;top:295px;width:7px;height:16px;background:#b8ccfa;border-radius:1px"></div>
<div class="a" style="left:808.5px;top:327.5px;width:40px;text-align:center;font-size:12.5px;color:#a4acec;line-height:12px">HL</div>
<div class="a" style="left:850px;top:323px;width:303px;height:19px;background:repeating-linear-gradient(90deg,#2e3541 0,#2e3541 3px,#06080d 3px,#06080d 4px)"></div>
<div class="a" style="left:850px;top:323px;width:140px;height:19px;background:#92f894"></div>
<div class="a" style="left:879.6px;top:323px;width:1px;height:19px;background:#6f8a72"></div>
<div class="a" style="left:907.3px;top:323px;width:1px;height:19px;background:#6f8a72"></div>
<div class="a" style="left:934.3px;top:323px;width:1px;height:19px;background:#6f8a72"></div>
<div class="a" style="left:962px;top:323px;width:1px;height:19px;background:#6f8a72"></div>
<div class="a" style="left:989px;top:323px;width:1px;height:19px;background:#6f8a72"></div>
<div class="a" style="left:990px;top:323px;width:27px;height:19px;background:#94fafc"></div>
<div class="a" style="left:1017px;top:323px;width:1px;height:19px;background:#6a6c80"></div>
<div class="a" style="left:1018px;top:323px;width:4px;height:19px;background:#b6e6f8"></div>
<div class="a" style="left:1062px;top:323px;width:7px;height:16px;background:#b8ccfa;border-radius:1px"></div>
<div class="a" style="left:808.5px;top:355.5px;width:40px;text-align:center;font-size:12.5px;color:#a4acec;line-height:12px">HR</div>
<div class="a" style="left:850px;top:351px;width:303px;height:19px;background:repeating-linear-gradient(90deg,#2e3541 0,#2e3541 3px,#06080d 3px,#06080d 4px)"></div>
<div class="a" style="left:850px;top:351px;width:140px;height:19px;background:#92f894"></div>
<div class="a" style="left:879.6px;top:351px;width:1px;height:19px;background:#6f8a72"></div>
<div class="a" style="left:907.3px;top:351px;width:1px;height:19px;background:#6f8a72"></div>
<div class="a" style="left:934.3px;top:351px;width:1px;height:19px;background:#6f8a72"></div>
<div class="a" style="left:962px;top:351px;width:1px;height:19px;background:#6f8a72"></div>
<div class="a" style="left:989px;top:351px;width:1px;height:19px;background:#6f8a72"></div>
<div class="a" style="left:990px;top:351px;width:27px;height:19px;background:#94fafc"></div>
<div class="a" style="left:1017px;top:351px;width:1px;height:19px;background:#6a6c80"></div>
<div class="a" style="left:1018px;top:351px;width:6px;height:19px;background:#b6e6f8"></div>
<div class="a" style="left:1063.3px;top:351px;width:7px;height:16px;background:#b8ccfa;border-radius:1px"></div>
<div class="a" style="left:808.5px;top:383.5px;width:40px;text-align:center;font-size:12.5px;color:#f2f4f8;line-height:12px">HLS</div>
<div class="a" style="left:850px;top:379px;width:303px;height:19px;background:repeating-linear-gradient(90deg,#2e3541 0,#2e3541 3px,#06080d 3px,#06080d 4px)"></div>
<div class="a" style="left:850px;top:379px;width:140px;height:19px;background:#92f894"></div>
<div class="a" style="left:879.6px;top:379px;width:1px;height:19px;background:#6f8a72"></div>
<div class="a" style="left:907.3px;top:379px;width:1px;height:19px;background:#6f8a72"></div>
<div class="a" style="left:934.3px;top:379px;width:1px;height:19px;background:#6f8a72"></div>
<div class="a" style="left:962px;top:379px;width:1px;height:19px;background:#6f8a72"></div>
<div class="a" style="left:989px;top:379px;width:1px;height:19px;background:#6f8a72"></div>
<div class="a" style="left:990px;top:379px;width:27px;height:19px;background:#94fafc"></div>
<div class="a" style="left:1017px;top:379px;width:1px;height:19px;background:#6a6c80"></div>
<div class="a" style="left:1018px;top:379px;width:7px;height:19px;background:#b6e6f8"></div>
<div class="a" style="left:1079px;top:379px;width:7px;height:16px;background:#f6c880;border-radius:1px"></div>
<div class="a" style="left:808.5px;top:411.5px;width:40px;text-align:center;font-size:12.5px;color:#f2f4f8;line-height:12px">HRS</div>
<div class="a" style="left:850px;top:407px;width:303px;height:19px;background:repeating-linear-gradient(90deg,#2e3541 0,#2e3541 3px,#06080d 3px,#06080d 4px)"></div>
<div class="a" style="left:850px;top:407px;width:140px;height:19px;background:#92f894"></div>
<div class="a" style="left:879.6px;top:407px;width:1px;height:19px;background:#6f8a72"></div>
<div class="a" style="left:907.3px;top:407px;width:1px;height:19px;background:#6f8a72"></div>
<div class="a" style="left:934.3px;top:407px;width:1px;height:19px;background:#6f8a72"></div>
<div class="a" style="left:962px;top:407px;width:1px;height:19px;background:#6f8a72"></div>
<div class="a" style="left:989px;top:407px;width:1px;height:19px;background:#6f8a72"></div>
<div class="a" style="left:990px;top:407px;width:27px;height:19px;background:#94fafc"></div>
<div class="a" style="left:1017px;top:407px;width:1px;height:19px;background:#6a6c80"></div>
<div class="a" style="left:1018px;top:407px;width:9.700000000000045px;height:19px;background:#b6e6f8"></div>
<div class="a" style="left:1079px;top:407px;width:7px;height:16px;background:#f6c880;border-radius:1px"></div>
<div class="a" style="left:1172px;top:14px;width:127px;height:146px;box-sizing:border-box;border:1px solid #b7bdc6;border-radius:5px;background:#dfe2e6;box-shadow:inset 1px 1px 0 #f3f4f6"></div><div class="a" style="left:1173px;top:15px;width:125px;height:22px;border-radius:4px 4px 0 0;background:linear-gradient(#f6f7f9,#dcdfe5);border-bottom:1px solid #c3c8cf;box-shadow:0 1px 0 #f2f3f5"></div><div class="a" style="left:1172px;top:18px;width:127px;text-align:center;font-size:14.5px;color:#52495a;line-height:18px;letter-spacing:0px">Kanal</div>
<div class="a" style="left:1172px;top:166px;width:127px;height:91px;box-sizing:border-box;border:1px solid #b7bdc6;border-radius:5px;background:#dfe2e6;box-shadow:inset 1px 1px 0 #f3f4f6"></div><div class="a" style="left:1173px;top:167px;width:125px;height:22px;border-radius:4px 4px 0 0;background:linear-gradient(#f6f7f9,#dcdfe5);border-bottom:1px solid #c3c8cf;box-shadow:0 1px 0 #f2f3f5"></div><div class="a" style="left:1172px;top:170px;width:127px;text-align:center;font-size:14.5px;color:#52495a;line-height:18px;letter-spacing:1px">Automation</div>
<div class="dd" style="left:1181px;top:46px;width:109px;height:24px"><div class="a" style="left:4px;top:3px;font-size:14px;color:#4a5268;line-height:16px">Left</div><div class="ar"></div></div>
<div class="lbl" style="left:1181px;top:77px;font-size:14px;letter-spacing:0.75px">Volume:</div>
<div class="inp" style="left:1217px;top:98px;width:72px;height:25px;line-height:23px">0.0</div>
<div class="cb" style="left:1181px;top:134px"></div>
<div class="lbl" style="left:1203px;top:134px;font-size:14px;letter-spacing:0.6px">Mute</div>
<div class="cb" style="left:1181px;top:199px"></div>
<div class="lbl" style="left:1203.5px;top:200px">An</div>
<div class="a" style="left:1246px;top:198px;width:35px;height:18px;box-sizing:border-box;border:1px solid #acc0d6;font-size:13px;font-weight:bold;color:#b2c2d8;text-align:center;line-height:16px">REC</div>
<div class="cb" style="left:1181px;top:229px"></div>
<div class="lbl" style="left:1203.5px;top:228.5px;color:#c2c5ca;font-size:14px;letter-spacing:0.6px">Zeichnen</div>
<div class="lbl" style="left:9.5px;top:646px;color:#111826;font-size:15px">Modus:</div>
<div class="dd" style="left:10px;top:666px;width:180px;height:24px"><div class="a" style="left:3px;top:4px;font-size:14.3px;line-height:16px">Schallfeldmodus (3D)</div><div class="ar"></div></div>
<div class="lbl" style="left:205.5px;top:646px">Pan L/R:</div>
<div class="dd" style="left:202px;top:666px;width:116px;height:24px"><div class="a" style="left:4px;top:4px;font-size:14px;line-height:16px">Y-Sym.</div><div class="ar"></div></div>
<div class="lbl" style="left:331px;top:646px;font-size:15px">Position:</div>
<div class="lbl" style="left:331px;top:672px;font-size:13px">x</div>
<div class="inp" style="left:346px;top:668px;width:74px;height:25px;line-height:25px">-28</div>
<div class="lbl" style="left:331px;top:712px;font-size:13px">y</div>
<div class="inp" style="left:346px;top:708px;width:74px;height:25px;line-height:25px">-5</div>
<div class="lbl" style="left:427px;top:712px;font-size:13px">z</div>
<div class="lbl" style="left:443px;top:646px;font-size:15px">Breite:</div>
<div class="inp" style="left:442px;top:668px;width:74px;height:25px;line-height:25px">64</div>
<div class="a" style="left:524px;top:673px;font-size:10px;color:#7884a0">%</div>
<div class="inp" style="left:442px;top:708px;width:74px;height:25px;line-height:25px">48</div>
<div class="lbl" style="left:562px;top:646px;font-size:15px">Center:</div>
<div class="inp" style="left:559px;top:668px;width:74px;height:25px;line-height:25px">100</div>
<div class="a" style="left:643px;top:673px;font-size:10px;color:#7884a0">%</div>
<div class="btn" style="left:561px;top:705px;width:102px;height:28px;line-height:25px;letter-spacing:0.5px">Pan-Setup...</div>
<div class="lbl" style="left:679px;top:646px;font-size:14.5px;letter-spacing:-0.7px">LFE:</div>
<div class="inp" style="left:680px;top:668px;width:74px;height:25px;line-height:25px">mute</div>
<div class="a" style="left:759px;top:673px;font-size:10px;color:#7884a0;letter-spacing:1px">dB</div>
<div class="cb" style="left:678px;top:708px"></div>
<div class="lbl" style="left:700.5px;top:710px;font-size:14.3px">Nur auf LFE</div>
<div class="lbl" style="left:799px;top:646px;font-size:14.8px">Kanalposition:</div>
<svg class="a" style="left:798px;top:673px" width="17" height="17"><rect x="1" y="1" width="16" height="16" fill="#f4f5f2"/><rect x="0" y="0" width="16" height="16" fill="#b2b29c"/><rect x="1" y="1" width="14" height="14" fill="#92c4f8"/><rect x="2" y="2" width="12" height="12" fill="#3592f4"/><path d="M2 2 H13 L13 3 Q10 5.5 7 7 Q4 8.5 2 11 Z" fill="#a8d2fa"/></svg>
<div class="lbl" style="left:820.5px;top:672.5px;font-size:15.5px">Festsetzen</div>
<div class="cb" style="left:798px;top:708px"></div>
<div class="lbl" style="left:820.5px;top:709px;font-size:14.5px">Y-Sym.</div>
<div class="btn" style="left:1181px;top:702px;width:105px;height:28px;line-height:26px;letter-spacing:0.5px">Setup...</div>
</body></html>
